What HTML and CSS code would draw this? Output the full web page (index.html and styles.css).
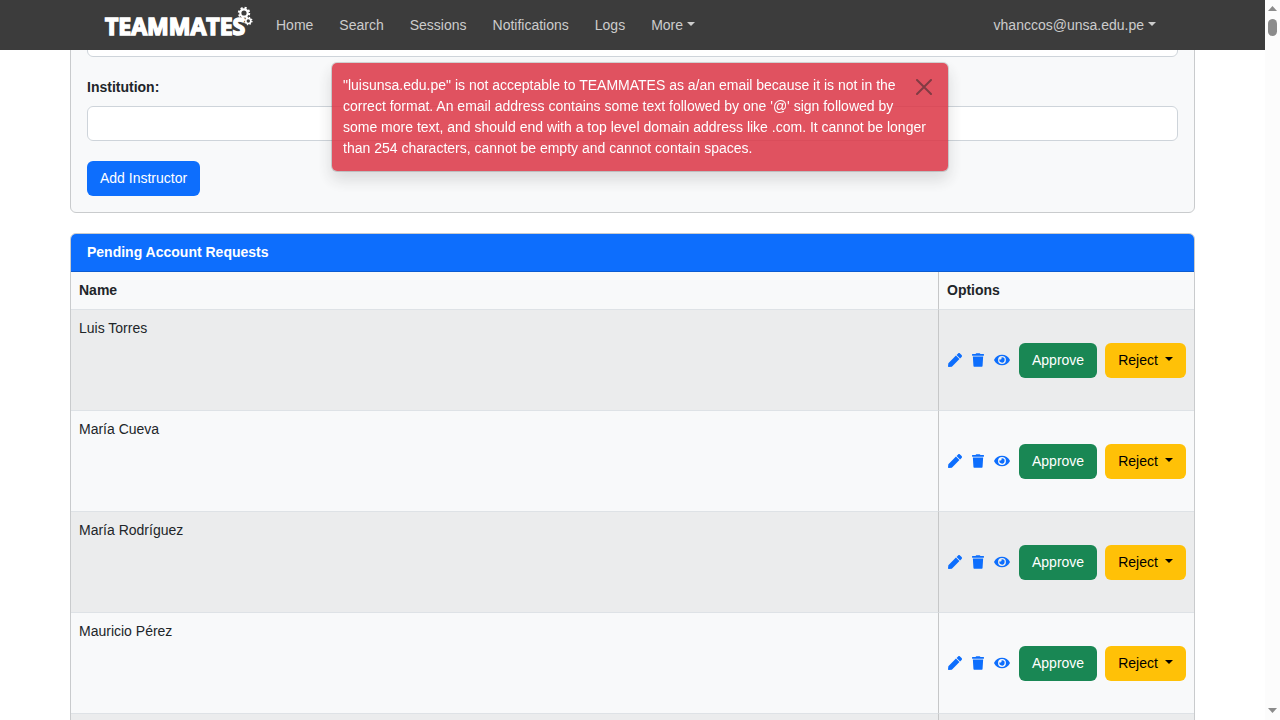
FILE: index.html
```html
<!DOCTYPE html>
<html lang="en">
<head>
<meta charset="utf-8">
<meta name="viewport" content="width=device-width, initial-scale=1">
<title>TEAMMATES</title>
<link rel="stylesheet" href="styles.css">
</head>
<body>
<svg class="sprite" aria-hidden="true">
  <symbol id="pen" viewBox="0 0 512 512"><path d="M290.74 93.24l128.02 128.02-277.99 277.99-114.14 12.6C11.35 513.54-1.56 500.62.14 485.34l12.7-114.22 277.9-277.88zm207.2-19.06l-60.11-60.11c-18.75-18.75-49.16-18.75-67.91 0l-56.55 56.55 128.02 128.02 56.55-56.55c18.75-18.76 18.75-49.16 0-67.91z"/></symbol>
  <symbol id="trash" viewBox="0 0 448 512"><path d="M432 32H312l-9.4-18.7A24 24 0 0 0 281.1 0H166.8a23.72 23.72 0 0 0-21.4 13.3L136 32H16A16 16 0 0 0 0 48v32a16 16 0 0 0 16 16h416a16 16 0 0 0 16-16V48a16 16 0 0 0-16-16zM53.2 467a48 48 0 0 0 47.9 45h245.8a48 48 0 0 0 47.9-45L416 128H32z"/></symbol>
  <symbol id="eye" viewBox="0 0 576 512"><path d="M572.52 241.4C518.29 135.59 410.93 64 288 64S57.68 135.64 3.48 241.41a32.35 32.35 0 0 0 0 29.19C57.71 376.41 165.07 448 288 448s230.32-71.64 284.52-177.41a32.35 32.35 0 0 0 0-29.19zM288 400a144 144 0 1 1 144-144 143.93 143.93 0 0 1-144 144zm0-240a95.31 95.31 0 0 0-25.31 3.79 47.85 47.85 0 0 1-66.9 66.9A95.78 95.78 0 1 0 288 160z"/></symbol>
</svg>

<div class="shell">
  <div class="page">
    <header class="navbar">
      <a class="brand" href="#" aria-label="TEAMMATES">
        <svg class="logo" viewBox="0 0 150 34">
          <text class="logo-text" x="1" y="29">TEAMMATES</text>
          <g class="gear">
            <circle cx="140" cy="7" r="5.2" stroke-width="2" stroke-dasharray="2.1 1.98"/>
            <circle cx="140" cy="7" r="3.7" stroke-width="2.2"/>
            <circle cx="144.3" cy="15" r="3.6" stroke-width="1.4" stroke-dasharray="1.4 1.43"/>
            <circle cx="144.3" cy="15" r="2.5" stroke-width="1.6"/>
          </g>
        </svg>
      </a>
      <nav class="nav-links">
        <a href="#">Home</a>
        <a href="#">Search</a>
        <a href="#">Sessions</a>
        <a href="#">Notifications</a>
        <a href="#">Logs</a>
        <a href="#" class="dropdown">More</a>
      </nav>
      <a href="#" class="account dropdown">vhanccos@unsa.edu.pe</a>
    </header>

    <main class="container">
      <form class="card form-card">
        <input class="field" type="text" aria-label="Email">
        <div class="form-group">
          <label for="institution">Institution:</label>
          <input class="field" id="institution" type="text">
        </div>
        <button class="btn btn-primary" type="button">Add Instructor</button>
      </form>

      <section class="card">
        <h2 class="card-header">Pending Account Requests</h2>
        <table class="requests">
          <thead>
            <tr><th>Name</th><th class="options">Options</th></tr>
          </thead>
          <tbody>
            <tr><td>Luis Torres</td><td class="options"><div class="actions"><div class="icons"><a href="#" aria-label="Edit"><svg><use href="#pen"/></svg></a><a href="#" aria-label="Delete"><svg class="narrow"><use href="#trash"/></svg></a><a href="#" aria-label="View"><svg class="wide"><use href="#eye"/></svg></a></div><button type="button" class="btn btn-success">Approve</button><button type="button" class="btn btn-warning dropdown">Reject</button></div></td></tr>
            <tr><td>María Cueva</td><td class="options"><div class="actions"><div class="icons"><a href="#" aria-label="Edit"><svg><use href="#pen"/></svg></a><a href="#" aria-label="Delete"><svg class="narrow"><use href="#trash"/></svg></a><a href="#" aria-label="View"><svg class="wide"><use href="#eye"/></svg></a></div><button type="button" class="btn btn-success">Approve</button><button type="button" class="btn btn-warning dropdown">Reject</button></div></td></tr>
            <tr><td>María Rodríguez</td><td class="options"><div class="actions"><div class="icons"><a href="#" aria-label="Edit"><svg><use href="#pen"/></svg></a><a href="#" aria-label="Delete"><svg class="narrow"><use href="#trash"/></svg></a><a href="#" aria-label="View"><svg class="wide"><use href="#eye"/></svg></a></div><button type="button" class="btn btn-success">Approve</button><button type="button" class="btn btn-warning dropdown">Reject</button></div></td></tr>
            <tr><td>Mauricio Pérez</td><td class="options"><div class="actions"><div class="icons"><a href="#" aria-label="Edit"><svg><use href="#pen"/></svg></a><a href="#" aria-label="Delete"><svg class="narrow"><use href="#trash"/></svg></a><a href="#" aria-label="View"><svg class="wide"><use href="#eye"/></svg></a></div><button type="button" class="btn btn-success">Approve</button><button type="button" class="btn btn-warning dropdown">Reject</button></div></td></tr>
            <tr><td></td><td class="options"></td></tr>
          </tbody>
        </table>
      </section>
    </main>
  </div>

  <div class="scrollbar" aria-hidden="true">
    <svg class="arrow" viewBox="0 0 9 5"><path d="M4.5 0L9 5H0z"/></svg>
    <div class="thumb"></div>
    <svg class="arrow arrow-down" viewBox="0 0 9 5"><path d="M0 0h9L4.5 5z"/></svg>
  </div>
</div>

<div class="toast-area">
  <div class="toast" role="alert">
    <button class="close" type="button" aria-label="Close"><svg viewBox="0 0 16 16"><path d="M1 1l14 14M15 1L1 15"/></svg></button>
    "luisunsa.edu.pe" is not acceptable to TEAMMATES as a/an email because it is not in the correct format. An email address contains some text followed by one '@' sign followed by some more text, and should end with a top level domain address like .com. It cannot be longer than 254 characters, cannot be empty and cannot contain spaces.
  </div>
</div>
</body>
</html>
```
FILE: styles.css
```css
* {
  box-sizing: border-box;
}

body {
  margin: 0;
  background: #fff;
  color: #212529;
  font: 14px/21px "Liberation Sans", Arial, sans-serif;
}

a {
  text-decoration: none;
}

.sprite {
  display: none;
}

.shell {
  display: flex;
  height: 100vh;
}

.page {
  position: relative;
  flex: 1;
  overflow: hidden;
}

/* Navigation bar */
.navbar {
  position: absolute;
  top: 0;
  left: 0;
  right: 0;
  z-index: 2;
  display: flex;
  align-items: center;
  height: 50px;
  padding: 0 109px 0 104px;
  background: #3c3c3c;
}

.brand {
  display: flex;
  margin-right: 22px;
}

.logo {
  width: 150px;
  height: 34px;
  margin-bottom: 4px;
  overflow: visible;
}

.logo-text {
  fill: #fff;
  stroke: #fff;
  stroke-width: 1.5px;
  font: 700 23px "Open Sans", "Noto Sans", sans-serif;
}

.gear {
  fill: none;
  stroke: #fff;
}

.nav-links {
  display: flex;
  flex: 1;
  gap: 26px;
}

.nav-links a,
.account {
  color: #ccc;
}

.dropdown {
  display: flex;
  align-items: center;
  gap: 4px;
}

.dropdown::after {
  content: "";
  border: 4px solid transparent;
  border-top-color: currentColor;
  border-bottom: 0;
  margin-bottom: 2px;
}

/* Content */
.container {
  max-width: 1125px;
  margin: 0 auto;
  padding-top: 5px;
}

.card {
  margin-bottom: 20px;
  background: #f8f9fa;
  border: 1px solid #c9cbcd;
  border-radius: 6px;
  overflow: hidden;
}

.form-card {
  padding: 16px;
}

.form-group {
  margin: 20px 0;
}

.form-group label {
  display: block;
  margin-bottom: 8px;
  font-weight: bold;
}

.field {
  display: block;
  width: 100%;
  height: 35px;
  padding: 6px 12px;
  font: inherit;
  background: #fff;
  border: 1px solid #ced4da;
  border-radius: 6px;
}

.btn {
  padding: 6px 12px;
  border: 1px solid transparent;
  border-radius: 6px;
  font: inherit;
}

.btn-primary {
  display: block;
  background: #0d6efd;
  color: #fff;
}

.btn-success {
  background: #198754;
  color: #fff;
}

.btn-warning {
  gap: 7px;
  background: #ffc107;
  color: #000;
}

.card-header {
  margin: 0;
  padding: 8px 16px;
  background: #0d6efd;
  border-bottom: 1px solid #0b5bd1;
  color: #fff;
  font-size: 14px;
  font-weight: bold;
}

.requests {
  width: 100%;
  border-spacing: 0;
}

.requests th,
.requests td {
  padding: 8px;
  border-bottom: 1px solid #dee2e6;
  text-align: left;
  vertical-align: top;
}

.requests td {
  height: 101px;
}

.requests tbody tr:nth-child(odd) {
  background: #ebeced;
}

.requests .options {
  width: 256px;
  border-left: 1px solid #c6c7c8;
  vertical-align: middle;
}

.actions {
  display: flex;
  align-items: center;
  gap: 8px;
}

.icons {
  display: flex;
  gap: 10px;
  padding: 0 1px;
}

.icons a {
  display: flex;
  color: #0d6efd;
}

.icons svg {
  width: 14px;
  height: 14px;
  fill: currentColor;
}

.icons .narrow {
  width: 12px;
}

.icons .wide {
  width: 16px;
}

/* Notification */
.toast-area {
  position: fixed;
  top: 62px;
  left: 0;
  right: 0;
  z-index: 3;
  display: flex;
  justify-content: center;
}

.toast {
  width: 618px;
  max-width: 100%;
  padding: 12px 12px 12px 11px;
  background: #dc3545;
  background-clip: padding-box;
  border: 1px solid rgba(0, 0, 0, 0.175);
  border-radius: 6px;
  box-shadow: 0 8px 16px rgba(0, 0, 0, 0.15);
  color: #fff;
  opacity: 0.85;
}

.close {
  float: right;
  width: 24px;
  height: 24px;
  padding: 4px;
  background: none;
  border: 0;
  opacity: 0.5;
}

.close svg {
  display: block;
  fill: none;
  stroke: #000;
  stroke-width: 2;
  stroke-linecap: round;
}

/* Scroll track */
.scrollbar {
  display: flex;
  flex-direction: column;
  align-items: center;
  width: 15px;
  padding: 6px 0 7px;
  background: #fcfcfc;
}

.arrow {
  width: 9px;
  height: 5px;
  fill: #8b8b8b;
}

.arrow-down {
  margin-top: auto;
}

.thumb {
  width: 9px;
  height: 17px;
  margin-top: 8px;
  background: #8b8b8b;
  border-radius: 5px;
}
```
